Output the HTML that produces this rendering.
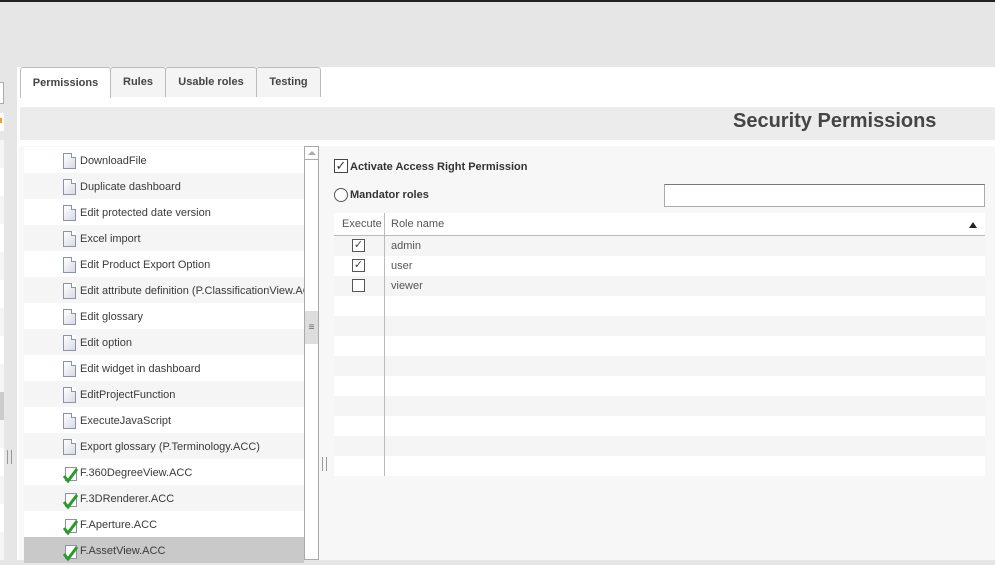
<!DOCTYPE html>
<html><head><meta charset="utf-8"><style>
*{box-sizing:border-box;margin:0;padding:0}
body{width:995px;height:560px;overflow:hidden;background:#e6e6e6;font-family:"Liberation Sans",Arial,sans-serif;font-size:11px;color:#333;position:relative}
.abs{position:absolute}
.tab{position:absolute;top:67px;height:30px;border:1px solid #bbb;border-bottom:none;border-radius:3px 3px 0 0;background:#f4f4f4;font-weight:bold;font-size:11px;color:#444;text-align:center;line-height:29px}
.row{position:absolute;left:24px;width:280px;height:26px;line-height:28px;font-size:11px;color:#3a3a3a}
.row .ic{position:absolute;left:39px;top:6px;width:13px;height:16px;border:1px solid #8a93a8;background:linear-gradient(135deg,#fff,#d8dbe6);}
.row .ic:after{content:"";position:absolute;right:-1px;top:-1px;width:4px;height:4px;background:#fff;border-left:1px solid #8a93a8;border-bottom:1px solid #8a93a8}
.row .t{position:absolute;left:56px;white-space:nowrap}
.chk{position:absolute;left:41px;top:8px;width:12px;height:14px;border:1px solid #8a93a8;background:#fff}
.trow{position:absolute;left:334px;width:651px;height:20px;line-height:21px;font-size:11px;color:#555}
.cb{position:absolute;left:18px;top:3px;width:13px;height:13px;border:1px solid #555;background:#fff;font-size:11px;line-height:11px;text-align:center;color:#444}
</style></head><body>
<div class="abs" style="left:0;top:0;width:995px;height:2px;background:#222"></div>
<div class="abs" style="left:0;top:82px;width:4px;height:22px;background:#fff;border:1px solid #aaa;border-left:none"></div>
<div class="abs" style="left:0;top:113px;width:4px;height:18px;background:#fff"></div>
<div class="abs" style="left:0;top:118px;width:2px;height:5px;background:#f0a030"></div>
<div class="abs" style="left:0;top:140px;width:4px;height:420px;background:repeating-linear-gradient(#f5f5f5 0 28px,#fff 28px 56px)"></div>
<div class="abs" style="left:0;top:392px;width:4px;height:28px;background:#ccc"></div>
<div class="abs" style="left:7px;top:450px;width:5px;height:14px;border-left:1px solid #999;border-right:1px solid #999"></div>
<div class="abs" style="left:17px;top:67px;width:978px;height:493px;background:#fff"></div>
<div class="tab" style="left:20px;width:91px;background:#fff;height:31px;line-height:31px">Permissions</div>
<div class="tab" style="left:110px;width:56px">Rules</div>
<div class="tab" style="left:165px;width:92px">Usable roles</div>
<div class="tab" style="left:256px;width:65px">Testing</div>
<div class="abs" style="left:20px;top:107px;width:975px;height:33px;background:#ececec"></div>
<div class="abs" style="left:733px;top:109px;font-size:20px;font-weight:bold;color:#444;line-height:24px">Security Permissions</div>
<div class="abs" style="left:19px;top:146px;width:300px;height:414px;background:#f8f8f8"></div>
<div id="list"></div>
<div class="abs" style="left:304px;top:146px;width:15px;height:414px;background:#fff;border:1px solid #aaa"></div>
<div class="abs" style="left:304px;top:146px;width:15px;height:14px;border:1px solid #aaa;background:#fff"></div>
<div class="abs" style="left:308px;top:151px;width:0;height:0;border-left:4px solid transparent;border-right:4px solid transparent;border-bottom:4px solid #aaa"></div>
<div class="abs" style="left:305px;top:311px;width:13px;height:33px;background:#ddd;text-align:center;line-height:33px;color:#666;font-size:10px">≡</div>
<div class="abs" style="left:319px;top:146px;width:676px;height:414px;background:#f7f7f7"></div>
<div class="abs" style="left:322px;top:457px;width:5px;height:14px;border-left:1px solid #999;border-right:1px solid #999"></div>
<div class="abs" style="left:334px;top:159px;width:14px;height:14px;border:1px solid #444;background:#fff;font-size:13px;line-height:12px;text-align:center;color:#333">✓</div>
<div class="abs" style="left:350px;top:161px;font-weight:bold;font-size:11px;color:#333">Activate Access Right Permission</div>
<div class="abs" style="left:334px;top:188px;width:14px;height:14px;border:1px solid #555;border-radius:50%;background:#fff"></div>
<div class="abs" style="left:350px;top:189px;font-weight:bold;font-size:11px;color:#333">Mandator roles</div>
<div class="abs" style="left:664px;top:184px;width:321px;height:23px;background:#fff;border:1px solid #aaa;border-top-color:#777"></div>
<div class="abs" style="left:334px;top:213px;width:651px;height:23px;background:#fff;border-bottom:1px solid #bbb"></div>
<div class="abs" style="left:342px;top:218px;color:#555">Execute</div>
<div class="abs" style="left:391px;top:218px;color:#555">Role name</div>
<div class="abs" style="left:969px;top:222px;width:0;height:0;border-left:4px solid transparent;border-right:4px solid transparent;border-bottom:6px solid #222"></div>
<div id="tbl"></div>
<div class="abs" style="left:384px;top:213px;width:1px;height:263px;background:#bbb"></div>
<script>
var items=["DownloadFile","Duplicate dashboard","Edit protected date version","Excel import","Edit Product Export Option","Edit attribute definition (P.ClassificationView.ACC)","Edit glossary","Edit option","Edit widget in dashboard","EditProjectFunction","ExecuteJavaScript","Export glossary (P.Terminology.ACC)","F.360DegreeView.ACC","F.3DRenderer.ACC","F.Aperture.ACC","F.AssetView.ACC"];
var h="";
items.forEach(function(t,i){
 var bg=i==15?"#c9c9c9":(i%2?"#f5f5f5":"#fff");
 var ic=i>=12?'<div class="chk"></div><svg class="abs" style="left:38px;top:7px" width="16" height="17"><path d="M2 10 L6 15 L15 3" stroke="#2a9a2a" stroke-width="3" fill="none"/></svg>':'<div class="ic"></div>';
 h+='<div class="row" style="top:'+(147+i*26)+'px;background:'+bg+'">'+ic+'<span class="t">'+t+'</span></div>';
});
document.getElementById("list").innerHTML=h;
var r=["admin","user","viewer"],c=[1,1,0],t="";
for(var i=0;i<12;i++){
 t+='<div class="trow" style="top:'+(236+i*20)+'px;background:'+(i%2?"#fff":"#f5f5f5")+'">'+(i<3?'<div class="cb">'+(c[i]?"✓":"")+'</div><span class="abs" style="left:57px">'+r[i]+'</span>':'')+'</div>';
}
document.getElementById("tbl").innerHTML=t;
</script>
</body></html>
